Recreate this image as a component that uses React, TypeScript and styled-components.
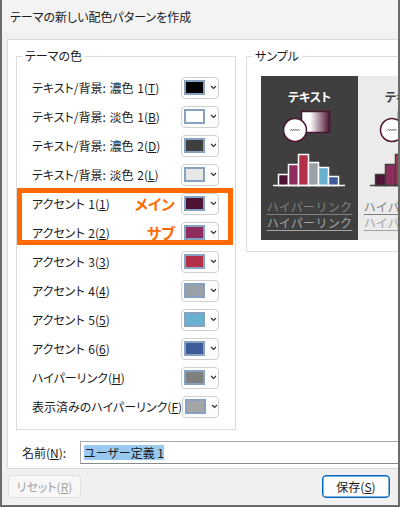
import React from 'react';
import styled, { createGlobalStyle } from 'styled-components';

const GlobalStyle = createGlobalStyle`
  html, body {
    margin: 0;
    padding: 0;
    background: #ffffff;
  }
  body {
    font-family: "Noto Sans CJK JP", "Noto Sans", sans-serif;
  }
`;

const Window = styled.div`
  width: 400px;
  height: 507px;
  box-sizing: border-box;
  border: 2px solid #6b6b6b;
  border-top: none;
  background: #f0f0f0;
  overflow: hidden;
  font-size: 12px;
  color: #1b1b1b;
  font-feature-settings: "palt";
  display: flex;
  flex-direction: column;
`;

const TitleBar = styled.div`
  height: 32px;
  flex: none;
  display: flex;
  align-items: center;
  padding-left: 8px;
  background: #f3f3f3;
`;

const Body = styled.div`
  padding: 7px 0 0 5px;
`;

const Panel = styled.div`
  width: 440px;
  height: 430px;
  box-sizing: border-box;
  background: #ffffff;
  border: 1px solid #dadada;
  border-right: none;
  padding: 8px 0 0 8px;
  display: flex;
  flex-direction: column;
`;

const Columns = styled.div`
  display: flex;
  align-items: flex-start;
  gap: 10px;
`;

const Group = styled.fieldset<{ $width: number }>`
  width: ${p => p.$width}px;
  box-sizing: border-box;
  margin: 0;
  padding: 0;
  border: 1px solid #dcdcdc;
  flex: none;
  min-width: 0;
`;

const Legend = styled.legend`
  padding: 0 3px;
  margin-left: 5px;
  line-height: 16px;
  font-size: 12px;
`;

const Rows = styled.div`
  position: relative;
  padding: 9px 16px 8px 15px;
`;

const Row = styled.div`
  height: 29px;
  display: flex;
  align-items: center;
`;

const Label = styled.span`
  flex: 1;
  white-space: nowrap;
  word-spacing: 1px;
`;

const Note = styled.span`
  color: #ff6a00;
  font-weight: bold;
  font-size: 15px;
  margin-right: 6px;
`;

const SwatchButton = styled.div`
  width: 38px;
  height: 22px;
  box-sizing: border-box;
  border: 1px solid #d0d0d0;
  border-radius: 4px;
  background: #fdfdfd;
  display: flex;
  align-items: center;
  padding-left: 2px;
  gap: 5px;
`;

const Swatch = styled.div<{ $color: string }>`
  width: 21px;
  height: 15px;
  box-sizing: border-box;
  border: 2px solid #86a2c0;
  background: ${p => p.$color};
`;

const Highlight = styled.div`
  position: absolute;
  left: 0;
  top: 124px;
  width: 216px;
  height: 57px;
  box-sizing: border-box;
  border: 5px solid #ff6a00;
  pointer-events: none;
`;

const SampleArea = styled.div`
  display: flex;
  padding: 12px 0 11px 14px;
`;

const SampleBox = styled.div<{ $dark?: boolean }>`
  width: 97px;
  height: 164px;
  flex: none;
  background: ${p => (p.$dark ? '#3f3f3f' : '#ebebeb')};
  display: flex;
  flex-direction: column;
  align-items: center;
`;

const SampleTitle = styled.div<{ $dark?: boolean }>`
  margin-top: 13px;
  line-height: 16px;
  font-weight: bold;
  font-size: 12px;
  color: ${p => (p.$dark ? '#ffffff' : '#3f3f3f')};
`;

const Chart = styled.svg`
  display: block;
  margin-top: 4px;
  flex: none;
`;

const Links = styled.div`
  margin-top: 12px;
  display: flex;
  flex-direction: column;
  align-items: center;
`;

const SampleLink = styled.span<{ $color: string }>`
  line-height: 16px;
  font-size: 12px;
  letter-spacing: 0.3px;
  font-feature-settings: normal;
  text-decoration: underline;
  text-underline-offset: 2px;
  color: ${p => p.$color};
`;

const NameRow = styled.div`
  display: flex;
  align-items: center;
  margin-top: 11px;
  height: 23px;
`;

const NameLabel = styled.span`
  width: 58px;
  margin-left: 6px;
  flex: none;
`;

const NameInput = styled.div`
  flex: 1;
  height: 23px;
  box-sizing: border-box;
  border: 1px solid #a9a9a9;
  border-bottom-color: #8a8a8a;
  border-right: none;
  display: flex;
  align-items: center;
  padding-left: 3px;
`;

const Selected = styled.span`
  background: #99c9ef;
  line-height: 15px;
  color: #1b1b1b;
`;

const Footer = styled.div`
  display: flex;
  justify-content: space-between;
  padding: 6px 8px 0 6px;
`;

const Button = styled.div<{ $primary?: boolean; $width: number }>`
  width: ${p => p.$width}px;
  height: 23px;
  box-sizing: border-box;
  border-radius: 4px;
  border: 1px solid ${p => (p.$primary ? '#0067c0' : '#e0e0e0')};
  box-shadow: ${p => (p.$primary ? 'inset 0 0 0 0.5px #0067c0' : 'none')};
  background: ${p => (p.$primary ? '#fdfdfd' : '#f7f7f7')};
  color: ${p => (p.$primary ? '#1b1b1b' : '#a3a3a3')};
  display: flex;
  align-items: center;
  justify-content: center;
`;

const ACCENTS = ['#4d1434', '#8e2c5e', '#b33048', '#9aa0a8', '#69b1d0', '#3f5c9a'];

const rows = [
  { text: 'テキスト/背景: 濃色 1', key: 'T', color: '#000000' },
  { text: 'テキスト/背景: 淡色 1', key: 'B', color: '#ffffff' },
  { text: 'テキスト/背景: 濃色 2', key: 'D', color: '#3f3f3f' },
  { text: 'テキスト/背景: 淡色 2', key: 'L', color: '#e8e8e8' },
  { text: 'アクセント 1', key: '1', color: ACCENTS[0], note: 'メイン' },
  { text: 'アクセント 2', key: '2', color: ACCENTS[1], note: 'サブ' },
  { text: 'アクセント 3', key: '3', color: ACCENTS[2] },
  { text: 'アクセント 4', key: '4', color: ACCENTS[3] },
  { text: 'アクセント 5', key: '5', color: ACCENTS[4] },
  { text: 'アクセント 6', key: '6', color: ACCENTS[5] },
  { text: 'ハイパーリンク', key: 'H', color: '#7f7f7f' },
  { text: '表示済みのハイパーリンク', key: 'F', color: '#a5a5a5' },
];

const Chevron = () => (
  <svg width="7" height="5" viewBox="0 0 7 5">
    <path d="M1 1 L3.5 3.5 L6 1" fill="none" stroke="#333" strokeWidth="1.2" />
  </svg>
);

const BAR_TOPS = [65, 55, 45, 53, 58, 67];

const SampleChart = ({ id, dark }: { id: string; dark?: boolean }) => {
  const line = dark ? '#ffffff' : '#404040';
  return (
    <Chart width="97" height="78" viewBox="0 0 97 78">
      <defs>
        <linearGradient id={id} x1="0" x2="1" y1="0" y2="0">
          <stop offset="0" stopColor="#ffffff" />
          <stop offset="0.3" stopColor="#ffffff" />
          <stop offset="1" stopColor="#4d1434" />
        </linearGradient>
      </defs>
      <rect x="40.5" y="2.5" width="28" height="21" fill={`url(#${id})`} stroke="#4d1434" strokeWidth="1.5" />
      <circle cx="34" cy="21" r="11.5" fill="#ffffff" stroke="#4d1434" strokeWidth="1.5" />
      <path
        d="M29 21.5 l1.2 -1.2 l1.2 1.2 l1.2 -1.2 l1.2 1.2 l1.2 -1.2 l1.2 1.2 l1.2 -1.2 l1.2 1.2"
        fill="none"
        stroke="#4d1434"
        strokeWidth="0.8"
      />
      {BAR_TOPS.map((top, i) => (
        <rect
          key={i}
          x={17.5 + i * 10}
          y={top + 0.5}
          width="10"
          height={76 - top}
          fill={ACCENTS[i]}
          stroke={line}
          strokeWidth="1.5"
        />
      ))}
      <line x1="12" x2="84" y1="76.5" y2="76.5" stroke={line} strokeWidth="1.5" />
    </Chart>
  );
};

const Sample = ({ dark }: { dark?: boolean }) => (
  <SampleBox $dark={dark}>
    <SampleTitle $dark={dark}>テキスト</SampleTitle>
    <SampleChart id={dark ? 'grad-dark' : 'grad-light'} dark={dark} />
    <Links>
      <SampleLink $color="#7f7f7f">ハイパーリンク</SampleLink>
      <SampleLink $color="#a5a5a5">ハイパーリンク</SampleLink>
    </Links>
  </SampleBox>
);

export default function App() {
  return (
    <>
      <GlobalStyle />
      <Window>
        <TitleBar>テーマの新しい配色パターンを作成</TitleBar>
        <Body>
          <Panel>
            <Columns>
              <Group $width={220}>
                <Legend>テーマの色</Legend>
                <Rows>
                  {rows.map(r => (
                    <Row key={r.key}>
                      <Label>
                        {r.text}(<u>{r.key}</u>)
                      </Label>
                      {r.note && <Note>{r.note}</Note>}
                      <SwatchButton>
                        <Swatch $color={r.color} />
                        <Chevron />
                      </SwatchButton>
                    </Row>
                  ))}
                  <Highlight />
                </Rows>
              </Group>
              <Group $width={250}>
                <Legend>サンプル</Legend>
                <SampleArea>
                  <Sample dark />
                  <Sample />
                </SampleArea>
              </Group>
            </Columns>
            <NameRow>
              <NameLabel>
                名前(<u>N</u>):
              </NameLabel>
              <NameInput>
                <Selected>ユーザー定義 1</Selected>
              </NameInput>
            </NameRow>
          </Panel>
        </Body>
        <Footer>
          <Button $width={73}>
            リセット(<u>R</u>)
          </Button>
          <Button $width={68} $primary>
            保存(<u>S</u>)
          </Button>
        </Footer>
      </Window>
    </>
  );
}
